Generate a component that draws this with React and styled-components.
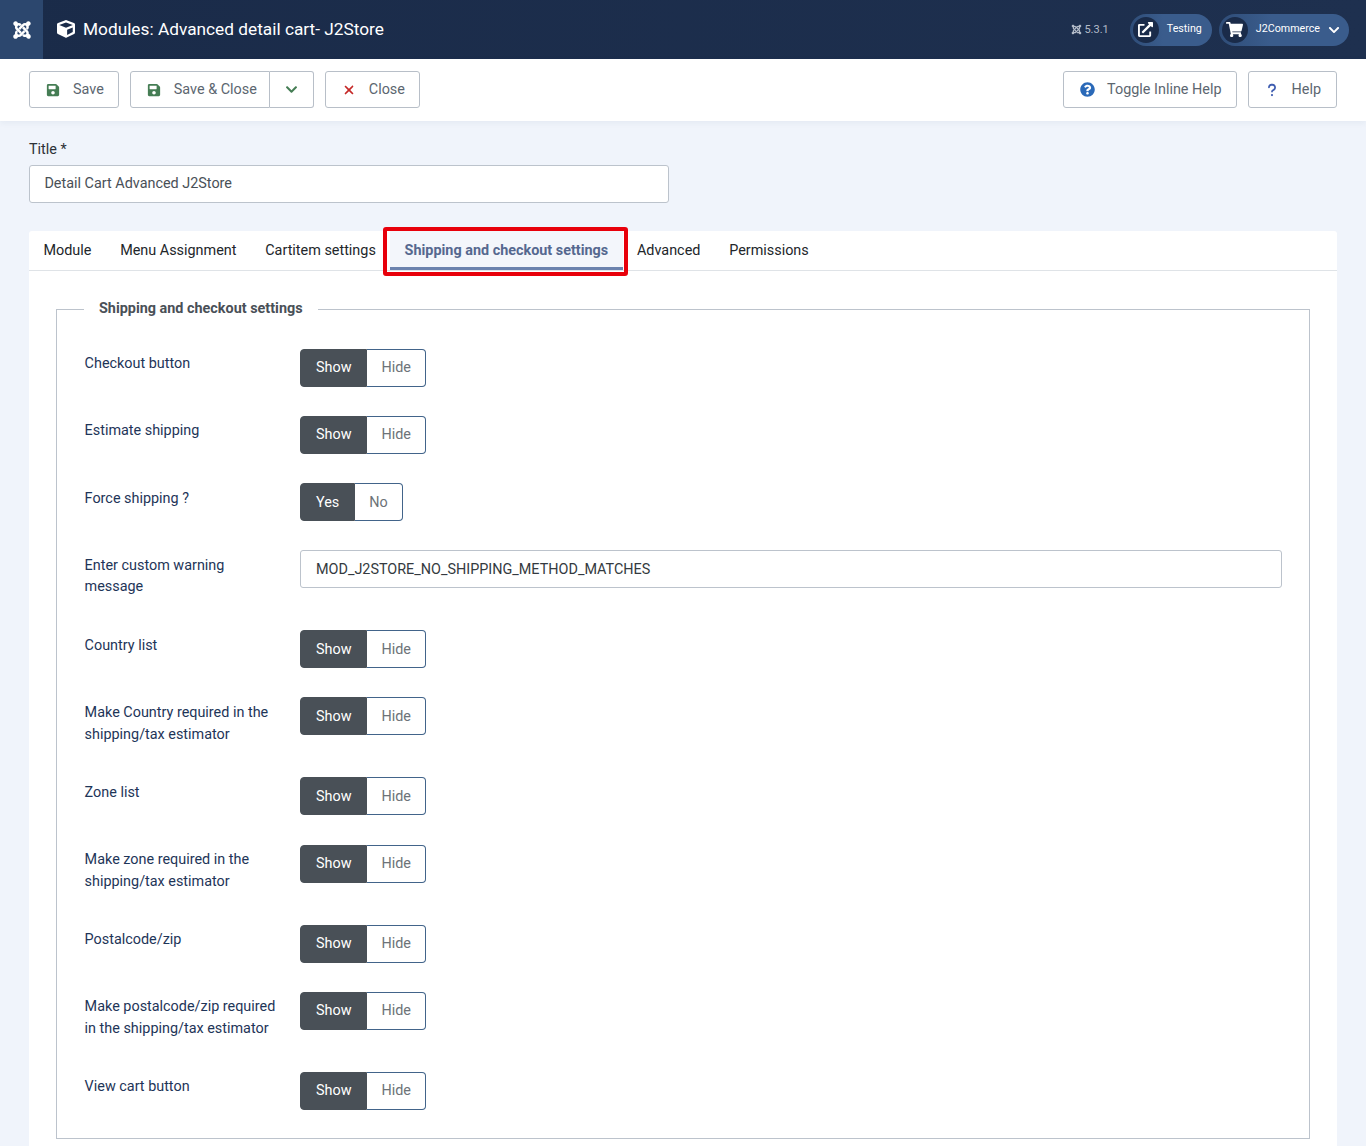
import React from "react"
import styled, { createGlobalStyle } from "styled-components"
import { FaJoomla, FaSave, FaQuestionCircle, FaCube, FaShoppingCart, FaChevronDown, FaExternalLinkAlt } from "react-icons/fa"
import { FaQuestion, FaXmark } from "react-icons/fa6"

const tabs = ["Module", "Menu Assignment", "Cartitem settings", "Shipping and checkout settings", "Advanced", "Permissions"]

const rows = [
  { label: "Checkout button", options: ["Show", "Hide"] },
  { label: "Estimate shipping", options: ["Show", "Hide"] },
  { label: "Force shipping ?", options: ["Yes", "No"] },
  { label: "Enter custom warning message", value: "MOD_J2STORE_NO_SHIPPING_METHOD_MATCHES" },
  { label: "Country list", options: ["Show", "Hide"] },
  { label: "Make Country required in the shipping/tax estimator", options: ["Show", "Hide"] },
  { label: "Zone list", options: ["Show", "Hide"] },
  { label: "Make zone required in the shipping/tax estimator", options: ["Show", "Hide"] },
  { label: "Postalcode/zip", options: ["Show", "Hide"] },
  { label: "Make postalcode/zip required in the shipping/tax estimator", options: ["Show", "Hide"] },
  { label: "View cart button", options: ["Show", "Hide"] },
]

const App = () => {
  return (
    <>
      <GlobalStyle />
      <Header>
        <LogoBox>
          <FaJoomla size={20} />
        </LogoBox>
        <PageTitle>
          <FaCube size={18} />
          <span>Modules: Advanced detail cart- J2Store</span>
        </PageTitle>
        <Version>
          <FaJoomla size={11} />
          5.3.1
        </Version>
        <Pill>
          <PillIcon>
            <FaExternalLinkAlt size={15} />
          </PillIcon>
          <PillText>Testing</PillText>
        </Pill>
        <Pill>
          <PillIcon>
            <FaShoppingCart size={17} />
          </PillIcon>
          <PillText>J2Commerce</PillText>
          <PillCaret>
            <FaChevronDown size={12} />
          </PillCaret>
        </Pill>
      </Header>

      <Toolbar>
        <Button>
          <IconSlot $color="#457d54">
            <FaSave size={14} />
          </IconSlot>
          Save
        </Button>
        <SplitGroup>
          <SplitMain>
            <IconSlot $color="#457d54">
              <FaSave size={14} />
            </IconSlot>
            Save &amp; Close
          </SplitMain>
          <SplitCaret>
            <FaChevronDown size={13} />
          </SplitCaret>
        </SplitGroup>
        <Button>
          <IconSlot $color="#c52827">
            <FaXmark size={14} />
          </IconSlot>
          Close
        </Button>
        <ToolbarSpacer />
        <Button>
          <IconSlot $color="#2a69b8">
            <FaQuestionCircle size={15} />
          </IconSlot>
          Toggle Inline Help
        </Button>
        <HelpButton>
          <IconSlot $color="#3f5db0">
            <FaQuestion size={14} />
          </IconSlot>
          Help
        </HelpButton>
      </Toolbar>

      <Main>
        <TitleLabel>Title *</TitleLabel>
        <TitleInput readOnly value="Detail Cart Advanced J2Store" />

        <Card>
          <TabBar>
            {tabs.map((t, i) => (
              <Tab key={t} $active={i === 3}>
                {t}
                {i === 3 && <Highlight />}
              </Tab>
            ))}
          </TabBar>
          <CardBody>
            <Fieldset>
              <Legend>Shipping and checkout settings</Legend>
              {rows.map((r) => (
                <Row key={r.label}>
                  <RowLabel>{r.label}</RowLabel>
                  {r.options ? (
                    <Switcher>
                      <SwitchOption $on>{r.options[0]}</SwitchOption>
                      <SwitchOption>{r.options[1]}</SwitchOption>
                    </Switcher>
                  ) : (
                    <TextInput readOnly value={r.value} />
                  )}
                </Row>
              ))}
            </Fieldset>
          </CardBody>
        </Card>
      </Main>
    </>
  )
}

export default App

const GlobalStyle = createGlobalStyle`
  html, body {
    margin: 0;
    height: 1146px;
    overflow: hidden;
  }
  body {
    background: #f0f4fb;
    font-family: Roboto, "Liberation Sans", sans-serif;
    font-size: 14.4px;
    color: #22262a;
  }
  * {
    box-sizing: border-box;
  }
`

const Header = styled.header`
  display: flex;
  align-items: center;
  height: 59px;
  padding-right: 17px;
  background: linear-gradient(90deg, #1a2b49, #1e304f);
  color: #fff;
`

const LogoBox = styled.div`
  display: flex;
  align-items: center;
  justify-content: center;
  width: 43px;
  height: 100%;
  background: #2c476e;
`

const PageTitle = styled.h1`
  display: flex;
  align-items: center;
  gap: 8px;
  flex: 1;
  margin: 0 0 1px 14px;
  font-size: 17.28px;
  font-weight: 400;
`

const Version = styled.div`
  display: flex;
  align-items: center;
  gap: 2px;
  margin-right: 14px;
  padding-bottom: 1px;
  font-size: 11px;
  color: #b4bcc9;
`

const Pill = styled.div`
  display: flex;
  align-items: center;
  height: 32px;
  margin-left: 7px;
  padding: 0 9px 0 3px;
  border-radius: 16px;
  background: linear-gradient(90deg, #2f4d78, #3a5c8c 40%);
`

const PillIcon = styled.span`
  display: flex;
  align-items: center;
  justify-content: center;
  width: 26px;
  height: 26px;
  border-radius: 50%;
  background: #1a2b49;
`

const PillText = styled.span`
  margin: 0 1px 2px 8px;
  font-size: 10.7px;
`

const PillCaret = styled.span`
  display: flex;
  margin-left: 7px;
`

const Toolbar = styled.div`
  display: flex;
  align-items: flex-start;
  gap: 11px;
  height: 62px;
  padding: 12px 29px 0;
  background: #fff;
  box-shadow: 0 2px 6px rgba(40, 60, 100, 0.06);
`

const ToolbarSpacer = styled.div`
  flex: 1;
`

const Button = styled.button`
  display: flex;
  align-items: center;
  height: 37px;
  padding: 0 14px 0 15px;
  border: 1px solid #b8bfc8;
  border-radius: 3px;
  background: #fff;
  color: #5c6670;
  font: inherit;
`

const HelpButton = styled(Button)`
  padding-right: 15px;
`

const IconSlot = styled.span`
  display: flex;
  justify-content: center;
  width: 16px;
  margin-right: 12px;
  color: ${(p) => p.$color};
`

const SplitGroup = styled.div`
  display: flex;
`

const SplitMain = styled(Button)`
  border-radius: 3px 0 0 3px;
  padding-right: 12px;
`

const SplitCaret = styled(Button)`
  justify-content: center;
  width: 44px;
  padding: 0;
  border-left: 0;
  border-radius: 0 3px 3px 0;
  color: #457d54;
`

const Main = styled.main`
  padding: 18px 29px 0;
`

const TitleLabel = styled.label`
  display: block;
  margin-bottom: 4.4px;
  line-height: 21.6px;
  color: #2c3136;
`

const TitleInput = styled.input`
  display: block;
  width: 640px;
  height: 38px;
  padding: 0 14.4px;
  border: 1px solid #bcc3cc;
  border-radius: 3px;
  background: #fff;
  color: #495057;
  font: inherit;
`

const Card = styled.section`
  margin-top: 28px;
  border-radius: 3px;
  background: #fff;
`

const TabBar = styled.nav`
  display: flex;
  height: 40px;
  border-bottom: 1px solid #dfe3e7;
`

const Tab = styled.div`
  position: relative;
  display: flex;
  align-items: center;
  padding: 0 14.4px;
  color: ${(p) => (p.$active ? "#55688f" : "#22262a")};
  font-weight: ${(p) => (p.$active ? 700 : 400)};
  background: ${(p) => (p.$active ? "#f3f6fb" : "transparent")};
  box-shadow: ${(p) => (p.$active ? "inset 0 -3px 0 #6b83ae" : "none")};
`

const Highlight = styled.span`
  position: absolute;
  inset: -4px -5.5px -6px -7px;
  border: 4px solid #e8000b;
  border-radius: 3px;
`

const CardBody = styled.div`
  padding: 29px 27px 60px;
`

const Fieldset = styled.fieldset`
  margin: 0;
  padding: 29.7px 27px 0 27.6px;
  min-width: 0;
  border: 1px solid #bcc3cc;
`

const Legend = styled.legend`
  margin-left: -0.6px;
  padding: 0 15px 2px;
  color: #495057;
  font-weight: 700;
`

const Row = styled.div`
  display: flex;
  align-items: flex-start;
  min-height: 38.4px;
  margin-bottom: 28.8px;

  &:last-child {
    margin-bottom: 28px;
  }
`

const RowLabel = styled.div`
  flex: none;
  width: 215.4px;
  padding: 4.5px 15px 3.5px 0;
  line-height: 21.6px;
  color: #1e3558;
`

const Switcher = styled.div`
  display: inline-flex;
  height: 38px;
`

const SwitchOption = styled.span`
  display: flex;
  align-items: center;
  padding: ${(p) => (p.$on ? "0 15px" : "0 14px")};
  border: 1px solid ${(p) => (p.$on ? "#495057" : "#42648a")};
  border-left-width: ${(p) => (p.$on ? "1px" : "0")};
  border-radius: ${(p) => (p.$on ? "4px 0 0 4px" : "0 4px 4px 0")};
  background: ${(p) => (p.$on ? "#495057" : "#fff")};
  color: ${(p) => (p.$on ? "#fff" : "#6d7378")};
`

const TextInput = styled.input`
  flex: 1;
  min-width: 0;
  height: 38px;
  padding: 0 15px;
  border: 1px solid #bcc3cc;
  border-radius: 3px;
  background: #fff;
  color: #343a40;
  font: inherit;
`
